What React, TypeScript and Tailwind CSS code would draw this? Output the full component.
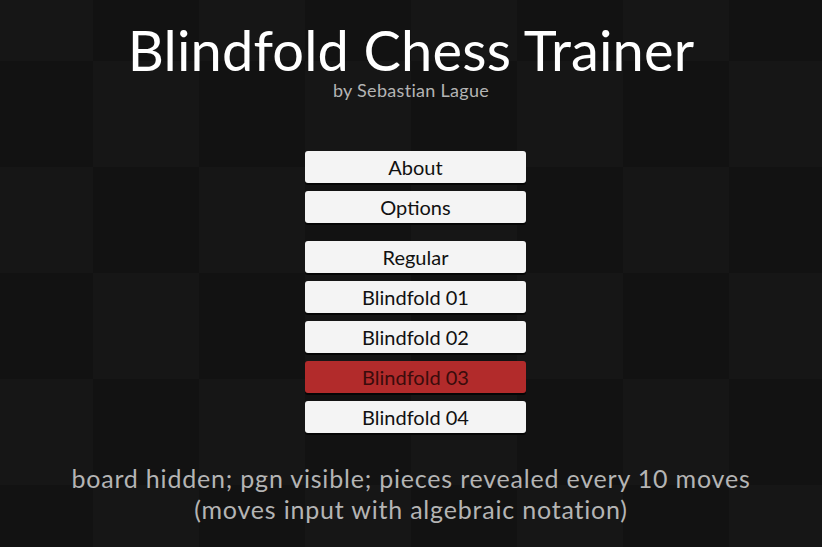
import React from "react";

const buttons = [
  { label: "About", gapTop: false, active: false },
  { label: "Options", gapTop: false, active: false },
  { label: "Regular", gapTop: true, active: false },
  { label: "Blindfold 01", gapTop: false, active: false },
  { label: "Blindfold 02", gapTop: false, active: false },
  { label: "Blindfold 03", gapTop: false, active: true },
  { label: "Blindfold 04", gapTop: false, active: false },
];

export default function App() {
  return (
    <div
      className="w-[822px] h-[547px] overflow-hidden bg-[#121212] bg-[image:repeating-conic-gradient(#161616_0%_25%,#121212_0%_50%)] bg-size-[212px_212px] bg-position-[305px_167px] flex flex-col items-center font-['Lato',sans-serif]"
    >
      <h1 className="mt-[24px] text-[56px] leading-[52px] text-white tracking-[0.15px]">
        Blindfold Chess Trainer
      </h1>
      <p className="mt-[5px] text-[18px] leading-[19px] text-[#b4b4b4] tracking-[0.3px]">by Sebastian Lague</p>

      <div className="mt-[51px] ml-[9px] flex flex-col w-[221px]">
        {buttons.map((b, i) => (
          <div
            key={b.label}
            className={`${i === 0 ? "" : b.gapTop ? "mt-[18px]" : "mt-[8px]"} h-[32px] rounded-[3px] flex items-center justify-center text-[20px] shadow-[0_2px_0_#050505] ${
              b.active ? "bg-[#b22b2b] text-[#3a0c0c]" : "bg-[#f4f4f4] text-[#111111]"
            }`}
          >
            {b.label}
          </div>
        ))}
      </div>

      <div className="mt-[30px] text-center text-[25px] leading-[31px] text-[#b4b4b4] tracking-[0.8px]">
        <p>board hidden; pgn visible; pieces revealed every 10 moves</p>
        <p>(moves input with algebraic notation)</p>
      </div>
    </div>
  );
}
